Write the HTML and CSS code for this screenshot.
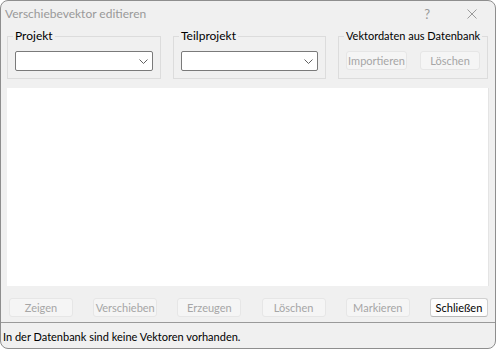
FILE: index.html
```html
<!DOCTYPE html>
<html>
<head>
    <title>Verschiebevektor editieren</title>
    <link rel="stylesheet" href="styles.css">
</head>
<body>
    <div class="window">
        <div class="titlebar">
            <span class="title">Verschiebevektor editieren</span>
            <span class="help">?</span>
            <svg class="close" width="10" height="10" viewBox="0 0 10 10">
                <path d="M0.5 0.5 L9.5 9.5 M9.5 0.5 L0.5 9.5" stroke="#9a9a9a" stroke-width="1" fill="none"/>
            </svg>
        </div>

        <div class="top-row">
            <fieldset class="group group-projekt">
                <legend>Projekt</legend>
                <div class="combo">
                    <svg class="chevron" width="9" height="5" viewBox="0 0 9 5">
                        <path d="M0.5 0.5 L4.5 4.5 L8.5 0.5" stroke="#606060" stroke-width="1" fill="none"/>
                    </svg>
                </div>
            </fieldset>
            <fieldset class="group group-teil">
                <legend>Teilprojekt</legend>
                <div class="combo">
                    <svg class="chevron" width="9" height="5" viewBox="0 0 9 5">
                        <path d="M0.5 0.5 L4.5 4.5 L8.5 0.5" stroke="#606060" stroke-width="1" fill="none"/>
                    </svg>
                </div>
            </fieldset>
            <fieldset class="group group-db">
                <legend>Vektordaten aus Datenbank</legend>
                <div class="db-buttons">
                    <button class="btn btn-import" disabled>Importieren</button>
                    <button class="btn btn-dbdel" disabled>Löschen</button>
                </div>
            </fieldset>
        </div>

        <div class="list"></div>

        <div class="button-row">
            <button class="btn" disabled>Zeigen</button>
            <button class="btn" disabled>Verschieben</button>
            <button class="btn" disabled>Erzeugen</button>
            <button class="btn" disabled>Löschen</button>
            <button class="btn" disabled>Markieren</button>
            <button class="btn btn-close">Schließen</button>
        </div>

        <div class="statusbar">In der Datenbank sind keine Vektoren vorhanden.</div>
    </div>
</body>
</html>
```

FILE: styles.css
```css
html, body {
    margin: 0;
    padding: 0;
    background: #ffffff;
}

body {
    font-family: Lato, "Noto Sans", sans-serif;
    font-size: 11px;
    color: #000;
}

.window {
    box-sizing: border-box;
    width: 496px;
    height: 349px;
    border: 1px solid #8e8e8e;
    border-radius: 8px;
    background: #f0f0f0;
    display: flex;
    flex-direction: column;
    overflow: hidden;
}

.titlebar {
    height: 27px;
    display: flex;
    align-items: center;
    padding-left: 4px;
    color: #999;
    font-size: 12px;
    flex-shrink: 0;
}

.title {
    flex: 1;
    line-height: 16px;
    margin-top: -1px;
}

.help {
    font-size: 13px;
    margin-right: 37px;
    margin-top: -2px;
}

.close {
    margin-right: 18px;
    margin-top: -2px;
}

.top-row {
    display: flex;
    gap: 12px;
    padding-left: 6px;
    flex-shrink: 0;
}

.group {
    margin: 0;
    border: 1px solid #dcdcdc;
    padding: 7px 7px 7px 7px;
    box-sizing: border-box;
    min-width: 0;
}

.group legend {
    padding: 0 2px;
    margin-left: -2px;
    line-height: 16px;
    font-size: 12px;
    white-space: nowrap;
}

.group-projekt {
    width: 154px;
}

.group-teil {
    width: 153px;
}

.group-db {
    width: 150px;
}

.group-db legend {
    font-size: 11px;
}

.combo {
    box-sizing: border-box;
    height: 20px;
    background: #fff;
    border: 1px solid #7a7a7a;
    border-radius: 2px;
    display: flex;
    align-items: center;
    justify-content: flex-end;
    padding-right: 4px;
}

.db-buttons {
    display: flex;
    justify-content: space-between;
}

.btn {
    font-family: inherit;
    font-size: 11px;
    box-sizing: border-box;
    height: 19px;
    width: 64px;
    padding: 0;
    background: #f5f5f5;
    border: 1px solid #e6e6e6;
    border-radius: 3px;
    color: #000;
}

.btn:disabled {
    color: #a6a6a6;
}

.btn-import {
    width: 61px;
}

.btn-dbdel {
    width: 60px;
}

.list {
    margin: 9px 6px 0 6px;
    height: 198px;
    background: #fff;
    border-right: 1px solid #e4e4e4;
    flex-shrink: 0;
}

.button-row {
    display: flex;
    justify-content: space-between;
    padding: 0 7px 0 8px;
    margin-top: 12px;
    flex-shrink: 0;
}

.btn-close {
    width: 58px;
    background: #fdfdfd;
    border: 1px solid #d0d0d0;
    border-bottom-color: #b8b8b8;
    color: #000;
}

.statusbar {
    margin-top: 5px;
    border-top: 1px solid #9a9a9a;
    flex: 1;
    padding: 6px 0 0 2px;
    line-height: 16px;
}
```
